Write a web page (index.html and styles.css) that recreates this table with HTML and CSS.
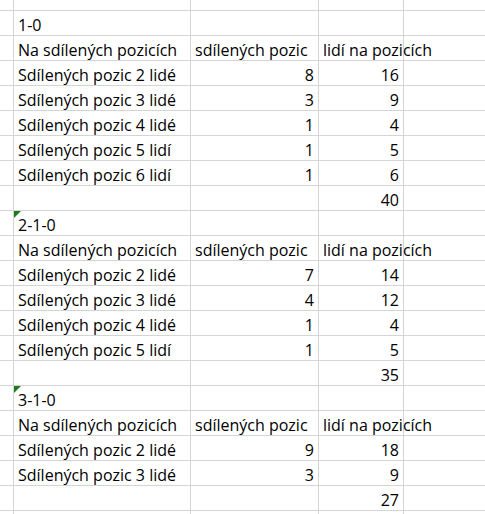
FILE: index.html
```html
<!DOCTYPE html>
<html>
<head>
<meta charset="utf-8">
<link rel="stylesheet" href="styles.css">
</head>
<body>
<div class="sheet">
  <div class="c top"></div><div class="c top"></div><div class="c top"></div><div class="c top"></div><div class="c top"></div>

  <div class="c"></div><div class="c">1-0</div><div class="c"></div><div class="c"></div><div class="c"></div>
  <div class="c"></div><div class="c">Na sdílených pozicích</div><div class="c">sdílených pozic</div><div class="c">lidí na pozicích</div><div class="c"></div>
  <div class="c"></div><div class="c">Sdílených pozic 2 lidé</div><div class="c n">8</div><div class="c n">16</div><div class="c"></div>
  <div class="c"></div><div class="c">Sdílených pozic 3 lidé</div><div class="c n">3</div><div class="c n">9</div><div class="c"></div>
  <div class="c"></div><div class="c">Sdílených pozic 4 lidé</div><div class="c n">1</div><div class="c n">4</div><div class="c"></div>
  <div class="c"></div><div class="c">Sdílených pozic 5 lidí</div><div class="c n">1</div><div class="c n">5</div><div class="c"></div>
  <div class="c"></div><div class="c">Sdílených pozic 6 lidí</div><div class="c n">1</div><div class="c n">6</div><div class="c"></div>
  <div class="c"></div><div class="c"></div><div class="c"></div><div class="c n">40</div><div class="c"></div>

  <div class="c"></div><div class="c flag">2-1-0</div><div class="c"></div><div class="c"></div><div class="c"></div>
  <div class="c"></div><div class="c">Na sdílených pozicích</div><div class="c">sdílených pozic</div><div class="c">lidí na pozicích</div><div class="c"></div>
  <div class="c"></div><div class="c">Sdílených pozic 2 lidé</div><div class="c n">7</div><div class="c n">14</div><div class="c"></div>
  <div class="c"></div><div class="c">Sdílených pozic 3 lidé</div><div class="c n">4</div><div class="c n">12</div><div class="c"></div>
  <div class="c"></div><div class="c">Sdílených pozic 4 lidé</div><div class="c n">1</div><div class="c n">4</div><div class="c"></div>
  <div class="c"></div><div class="c">Sdílených pozic 5 lidí</div><div class="c n">1</div><div class="c n">5</div><div class="c"></div>
  <div class="c"></div><div class="c"></div><div class="c"></div><div class="c n">35</div><div class="c"></div>

  <div class="c"></div><div class="c flag">3-1-0</div><div class="c"></div><div class="c"></div><div class="c"></div>
  <div class="c"></div><div class="c">Na sdílených pozicích</div><div class="c">sdílených pozic</div><div class="c">lidí na pozicích</div><div class="c"></div>
  <div class="c"></div><div class="c">Sdílených pozic 2 lidé</div><div class="c n">9</div><div class="c n">18</div><div class="c"></div>
  <div class="c"></div><div class="c">Sdílených pozic 3 lidé</div><div class="c n">3</div><div class="c n">9</div><div class="c"></div>
  <div class="c"></div><div class="c"></div><div class="c"></div><div class="c n">27</div><div class="c"></div>
  <div class="c"></div><div class="c"></div><div class="c"></div><div class="c"></div><div class="c"></div>
</div>
</body>
</html>
```
FILE: styles.css
```css
html, body {
  margin: 0;
  padding: 0;
  background: #ffffff;
  overflow: hidden;
}
.sheet {
  display: grid;
  grid-template-columns: 14px 177px 128px 85px 100px;
  grid-template-rows: 11px repeat(21, 25px);
  font-family: "Open Sans", Lato, sans-serif;
  font-size: 16px;
  color: #000000;
}
.c {
  box-sizing: border-box;
  border-right: 1px solid #d4d4d4;
  border-bottom: 1px solid #d4d4d4;
  padding: 0 4px 1px 4px;
  display: flex;
  align-items: flex-end;
  white-space: nowrap;
  overflow: visible;
  line-height: 18px;
  position: relative;
}
.n {
  justify-content: flex-end;
}
.flag::before {
  content: "";
  position: absolute;
  left: 0;
  top: 0;
  border-top: 7px solid #1e7b1e;
  border-right: 7px solid transparent;
}
```
